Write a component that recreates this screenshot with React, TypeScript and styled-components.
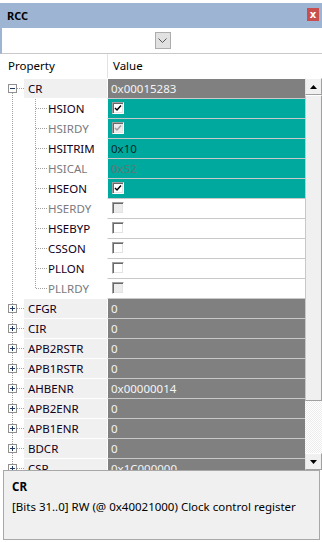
import React from 'react';
import styled, { createGlobalStyle } from 'styled-components';

const GlobalStyle = createGlobalStyle`
    html, body {
        margin: 0;
        padding: 0;
        background: #ffffff;
    }
    body {
        font-family: 'Noto Sans', 'Liberation Sans', sans-serif;
        font-size: 11px;
        color: #000000;
    }
`;

type Tone = 'gray' | 'teal' | 'white';

type Field = {
    name: string;
    value?: string;
    check?: boolean;
    disabled?: boolean;
    tone: Tone;
};

type Register = {
    name: string;
    value: string;
    expanded?: boolean;
    fields?: Field[];
};

const registers: Register[] = [
    {
        name: 'CR',
        value: '0x00015283',
        expanded: true,
        fields: [
            { name: 'HSION', check: true, tone: 'teal' },
            { name: 'HSIRDY', check: true, disabled: true, tone: 'teal' },
            { name: 'HSITRIM', value: '0x10', tone: 'teal' },
            { name: 'HSICAL', value: '0x52', disabled: true, tone: 'teal' },
            { name: 'HSEON', check: true, tone: 'teal' },
            { name: 'HSERDY', check: false, disabled: true, tone: 'white' },
            { name: 'HSEBYP', check: false, tone: 'white' },
            { name: 'CSSON', check: false, tone: 'white' },
            { name: 'PLLON', check: false, tone: 'white' },
            { name: 'PLLRDY', check: false, disabled: true, tone: 'white' },
        ],
    },
    { name: 'CFGR', value: '0' },
    { name: 'CIR', value: '0' },
    { name: 'APB2RSTR', value: '0' },
    { name: 'APB1RSTR', value: '0' },
    { name: 'AHBENR', value: '0x00000014' },
    { name: 'APB2ENR', value: '0' },
    { name: 'APB1ENR', value: '0' },
    { name: 'BDCR', value: '0' },
    { name: 'CSR', value: '0x1C000000' },
];

const Window = styled.div`
    width: 322px;
    height: 542px;
    padding-top: 3px;
    box-sizing: border-box;
    display: flex;
    flex-direction: column;
    overflow: hidden;
`;

const TitleBar = styled.div`
    height: 25px;
    background: #9db5d2;
    display: flex;
    align-items: center;
    justify-content: space-between;
    padding: 0 3px 0 7px;
`;

const Title = styled.span`
    font-weight: 700;
    font-size: 11px;
    color: #000;
`;

const CloseButton = styled.div`
    width: 12px;
    height: 13px;
    margin-top: -3px;
    background: #c94f4f;
    color: #fff;
    font-family: 'DejaVu Sans', sans-serif;
    font-weight: 700;
    font-size: 10px;
    line-height: 13px;
    text-align: center;
`;

const Toolbar = styled.div`
    border-left: 2px solid #9db5d2;
    border-bottom: 1px solid #c8c8c8;
    display: flex;
    justify-content: center;
    align-items: flex-start;
    padding-top: 4px;
    height: 21px;
`;

const DropButton = styled.div`
    width: 14px;
    height: 15px;
    margin-left: 1px;
    background: #e1e1e1;
    border: 1px solid #adadad;
    display: flex;
    align-items: center;
    justify-content: center;
`;

const Header = styled.div`
    height: 24px;
    display: flex;
    align-items: center;
`;

const HeaderCell = styled.div<{ $width?: number }>`
    ${({ $width }) => ($width ? `width: ${$width}px;` : 'flex: 1;')}
    height: 24px;
    line-height: 24px;
    padding-left: ${({ $width }) => ($width ? 8 : 5)}px;
    box-sizing: border-box;
    border-right: ${({ $width }) => ($width ? '1px solid #e3e3e3' : 'none')};
    font-size: 11.5px;
`;

const ListArea = styled.div`
    height: 392px;
    display: flex;
`;

const Rows = styled.div`
    flex: 1;
    padding-top: 1px;
    overflow: hidden;
`;

const Row = styled.div`
    height: 20px;
    display: flex;
`;

const PropCell = styled.div`
    width: 107px;
    height: 20px;
    display: flex;
`;

const Label = styled.div<{ $parent?: boolean; $disabled?: boolean }>`
    flex: 1;
    height: 20px;
    box-sizing: border-box;
    border-bottom: 1px solid #ffffff;
    background: ${({ $parent }) => ($parent ? '#f0f0f0' : '#ffffff')};
    padding-left: ${({ $parent }) => ($parent ? 4 : 1)}px;
    line-height: 19px;
    font-size: 11.5px;
    white-space: nowrap;
    color: ${({ $disabled }) => ($disabled ? '#7a7a80' : '#10001a')};
`;

const toneBg: Record<Tone, string> = {
    gray: '#808080',
    teal: '#00a99d',
    white: '#ffffff',
};

const ValueCell = styled.div<{ $tone: Tone; $disabled?: boolean }>`
    flex: 1;
    height: 20px;
    box-sizing: border-box;
    border-left: 1px solid #ffffff;
    border-bottom: 1px solid #c8c8c8;
    background: ${({ $tone }) => toneBg[$tone]};
    padding-left: 3px;
    display: flex;
    align-items: center;
    font-size: 11.5px;
    white-space: nowrap;
    color: ${({ $tone, $disabled }) =>
        $tone === 'gray' ? '#f4f4f4' : $disabled ? '#5c7875' : '#002a2a'};
`;

const CheckBox = styled.span<{ $disabled?: boolean }>`
    width: 12px;
    height: 12px;
    margin-left: 1px;
    margin-top: -1px;
    box-sizing: border-box;
    border-top: 1px solid #a0a0a0;
    border-left: 1px solid #a0a0a0;
    border-right: 1px solid #ffffff;
    border-bottom: 1px solid #ffffff;
    box-shadow: inset 1px 1px 0 #696969, inset -1px -1px 0 #e3e3e3;
    background: ${({ $disabled }) => ($disabled ? '#ececec' : '#ffffff')};
    display: flex;
    align-items: center;
    justify-content: center;
`;

const Scrollbar = styled.div`
    width: 17px;
    display: flex;
    flex-direction: column;
`;

const ScrollButton = styled.div`
    height: 17px;
    box-sizing: border-box;
    background: #f0f0f0;
    border: 1px solid;
    border-color: #ffffff #a0a0a0 #a0a0a0 #e3e3e3;
    display: flex;
    align-items: center;
    justify-content: center;
`;

const Thumb = styled.div`
    height: 306px;
    box-sizing: border-box;
    background: #f0f0f0;
    border: 1px solid;
    border-color: #ffffff #a0a0a0 #a0a0a0 #c8c8c8;
`;

const Track = styled.div`
    flex: 1;
    background: repeating-conic-gradient(#ffffff 0 25%, #ececec 0 50%) 0 0 / 2px 2px;
`;

const Description = styled.div`
    height: 70px;
    margin: 0 2px 0 3px;
    box-sizing: border-box;
    background: #f0f0f0;
    border: 1px solid #a8a8a8;
    padding: 7px 0 0 8px;
    font-size: 11.5px;
`;

const DescTitle = styled.div`
    font-weight: 700;
    line-height: 17px;
`;

const DescText = styled.div`
    margin-top: 3px;
    line-height: 17px;
    white-space: nowrap;
`;

const DOT = '1 1';
const LINE = '#a0a0a0';

function ExpandBox({ open }: { open: boolean }) {
    return (
        <>
            <rect x={8.5} y={5.5} width={8} height={8} fill="#fdfdfd" stroke="#909090" />
            <line x1={10} y1={9.5} x2={15} y2={9.5} stroke="#1e395b" />
            {!open && <line x1={12.5} y1={7} x2={12.5} y2={12} stroke="#1e395b" />}
        </>
    );
}

function ParentGutter({ first, last, open }: { first: boolean; last: boolean; open: boolean }) {
    return (
        <svg width={24} height={20} style={{ display: 'block', flex: 'none' }}>
            {!first && <line x1={12.5} y1={0} x2={12.5} y2={5} stroke={LINE} strokeDasharray={DOT} />}
            {!last && <line x1={12.5} y1={14} x2={12.5} y2={20} stroke={LINE} strokeDasharray={DOT} />}
            <line x1={17} y1={9.5} x2={24} y2={9.5} stroke={LINE} strokeDasharray={DOT} />
            <ExpandBox open={open} />
        </svg>
    );
}

function ChildGutter({ last }: { last: boolean }) {
    return (
        <svg width={47} height={20} style={{ display: 'block', flex: 'none' }}>
            <line x1={12.5} y1={0} x2={12.5} y2={20} stroke={LINE} strokeDasharray={DOT} />
            <line x1={35.5} y1={0} x2={35.5} y2={last ? 10 : 20} stroke={LINE} strokeDasharray={DOT} />
            <line x1={36} y1={9.5} x2={47} y2={9.5} stroke={LINE} strokeDasharray={DOT} />
        </svg>
    );
}

function Check({ checked, disabled }: { checked: boolean; disabled?: boolean }) {
    return (
        <CheckBox $disabled={disabled}>
            {checked && (
                <svg width={8} height={8} viewBox="0 0 8 8">
                    <path
                        d="M1 4 L3 6 L7 1.5"
                        fill="none"
                        stroke={disabled ? '#9a9a9a' : '#000'}
                        strokeWidth={1.4}
                    />
                </svg>
            )}
        </CheckBox>
    );
}

function Triangle({ up }: { up: boolean }) {
    return (
        <svg width={7} height={4} viewBox="0 0 7 4">
            <path d={up ? 'M0 4 L3.5 0 L7 4 Z' : 'M0 0 L3.5 4 L7 0 Z'} fill="#000" />
        </svg>
    );
}

export default function App() {
    return (
        <>
            <GlobalStyle />
            <Window>
                <TitleBar>
                    <Title>RCC</Title>
                    <CloseButton>x</CloseButton>
                </TitleBar>

                <Toolbar>
                    <DropButton>
                        <svg width={9} height={5} viewBox="0 0 9 5">
                            <path d="M0.5 0.5 L4.5 4.5 L8.5 0.5" fill="none" stroke="#555" />
                        </svg>
                    </DropButton>
                </Toolbar>

                <Header>
                    <HeaderCell $width={108}>Property</HeaderCell>
                    <HeaderCell>Value</HeaderCell>
                </Header>

                <ListArea>
                    <Rows>
                        {registers.map((reg, i) => (
                            <React.Fragment key={reg.name}>
                                <Row>
                                    <PropCell>
                                        <ParentGutter
                                            first={i === 0}
                                            last={i === registers.length - 1}
                                            open={!!reg.expanded}
                                        />
                                        <Label $parent>{reg.name}</Label>
                                    </PropCell>
                                    <ValueCell $tone="gray">{reg.value}</ValueCell>
                                </Row>
                                {reg.expanded &&
                                    reg.fields?.map((f, j) => (
                                        <Row key={f.name}>
                                            <PropCell>
                                                <ChildGutter last={j === (reg.fields?.length ?? 0) - 1} />
                                                <Label $disabled={f.disabled}>{f.name}</Label>
                                            </PropCell>
                                            <ValueCell $tone={f.tone} $disabled={f.disabled}>
                                                {f.check !== undefined ? (
                                                    <Check checked={f.check} disabled={f.disabled} />
                                                ) : (
                                                    f.value
                                                )}
                                            </ValueCell>
                                        </Row>
                                    ))}
                            </React.Fragment>
                        ))}
                    </Rows>
                    <Scrollbar>
                        <ScrollButton>
                            <Triangle up />
                        </ScrollButton>
                        <Thumb />
                        <Track />
                        <ScrollButton>
                            <Triangle up={false} />
                        </ScrollButton>
                    </Scrollbar>
                </ListArea>

                <Description>
                    <DescTitle>CR</DescTitle>
                    <DescText>[Bits 31..0] RW (@ 0x40021000) Clock control register</DescText>
                </Description>
            </Window>
        </>
    );
}
